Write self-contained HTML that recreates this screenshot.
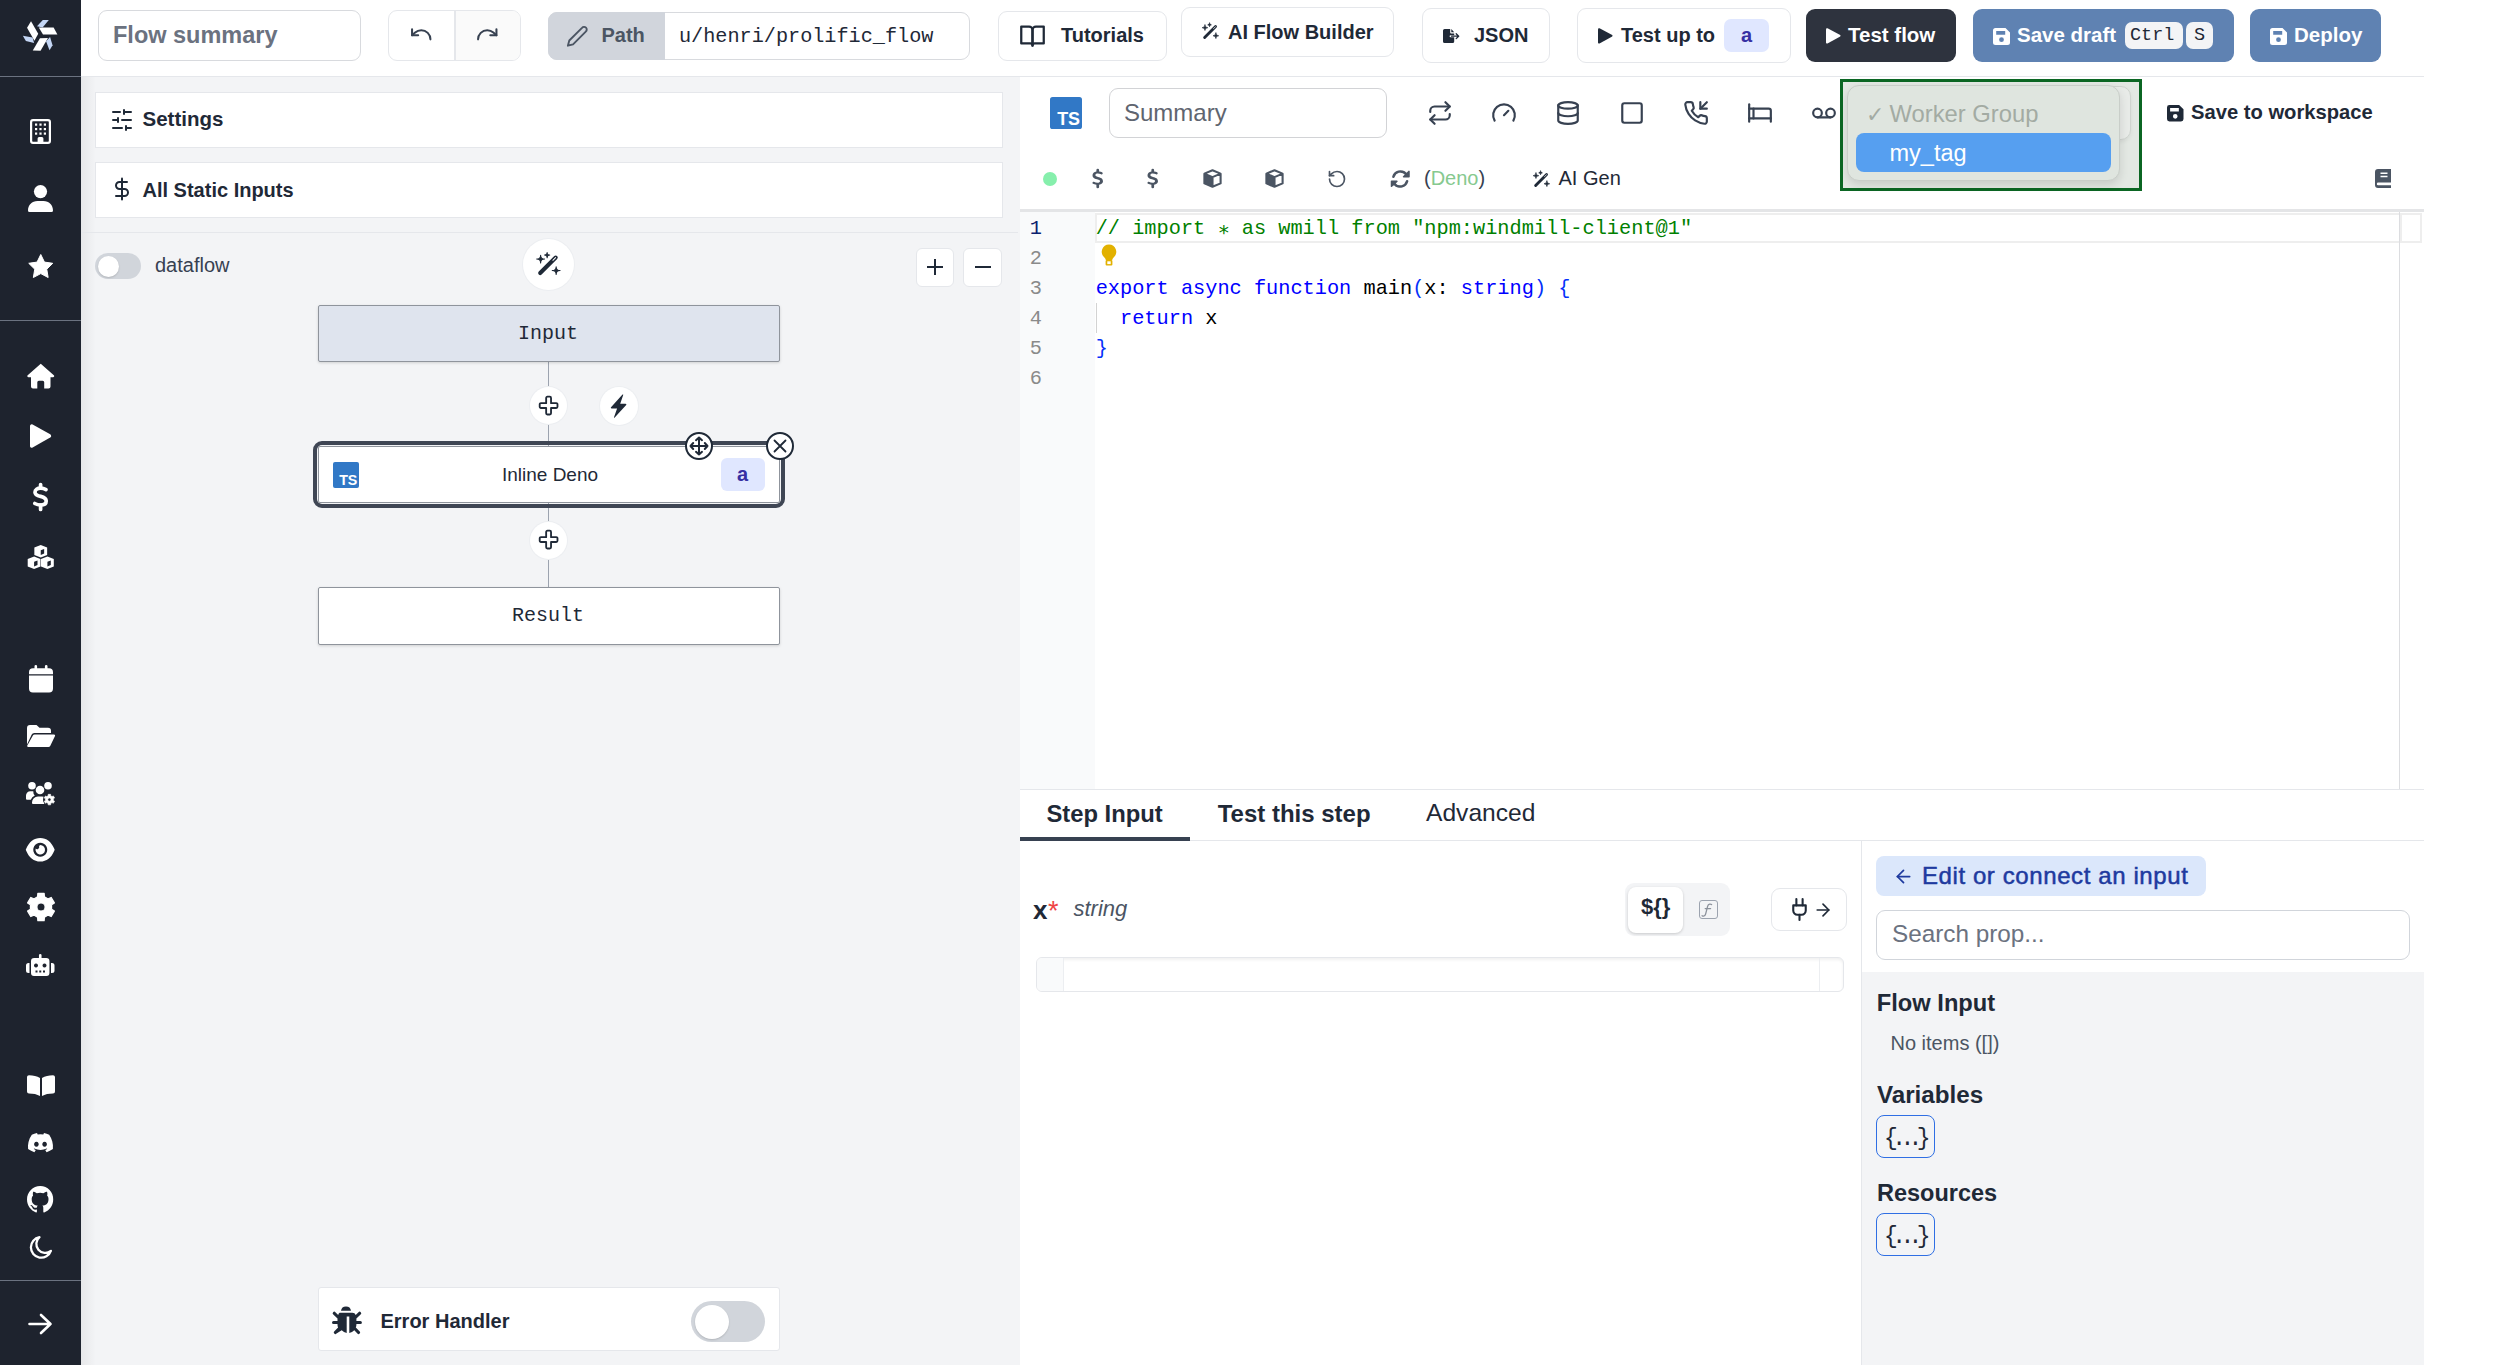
<!DOCTYPE html>
<html><head><meta charset="utf-8"><style>
html,body{margin:0;padding:0;}
body{width:2500px;height:1365px;position:relative;overflow:hidden;background:#fff;font-family:'Liberation Sans', sans-serif;color:#1f2937;}
svg{overflow:visible}
</style></head><body>
<div style="position:absolute;left:0px;top:0px;width:81px;height:1365px;background:#1e232e;"></div><div style="position:absolute;left:0px;top:76px;width:81px;height:1px;background:#6b7280;"></div><div style="position:absolute;left:0px;top:320px;width:81px;height:1px;background:#6b7280;"></div><div style="position:absolute;left:0px;top:1280px;width:81px;height:1px;background:#6b7280;"></div><div style="position:absolute;left:81px;top:76px;width:2343px;height:1px;background:#e5e7eb;"></div><div style="position:absolute;left:81px;top:77px;width:939px;height:1288px;background:#f3f4f6;"></div><div style="position:absolute;left:81px;top:77px;width:15px;height:1288px;background:linear-gradient(90deg,rgba(0,0,0,.05),rgba(0,0,0,0));"></div><div style="position:absolute;left:95px;top:92px;width:908px;height:56px;background:#fff;border:1px solid #e5e7eb;box-sizing:border-box;"></div><div style="position:absolute;left:95px;top:162px;width:908px;height:56px;background:#fff;border:1px solid #e5e7eb;box-sizing:border-box;"></div><div style="position:absolute;left:81px;top:232px;width:937px;height:1px;background:#e5e7eb;"></div><div style="position:absolute;left:1020px;top:209px;width:1404px;height:3px;background:#e4e5e7;"></div><div style="position:absolute;left:1020px;top:212px;width:75px;height:577px;background:#f9fafb;"></div><div style="position:absolute;left:2399px;top:212px;width:1px;height:577px;background:#dcdde0;"></div><div style="position:absolute;left:1020px;top:789px;width:1404px;height:1px;background:#e5e7eb;"></div><div style="position:absolute;left:1020px;top:840px;width:1404px;height:1px;background:#e5e7eb;"></div><div style="position:absolute;left:1020px;top:837px;width:170px;height:4px;background:#374151;"></div><div style="position:absolute;left:1861px;top:841px;width:1px;height:524px;background:#e5e7eb;"></div><div style="position:absolute;left:1862px;top:972px;width:562px;height:393px;background:#f3f4f6;"></div><div style="position:absolute;left:98px;top:10px;width:263px;height:51px;border:1.5px solid #d8dade;border-radius:9px;box-sizing:border-box;background:#fff;"></div><div style="position:absolute;left:113.00px;top:23.91px;font-family:'Liberation Sans', sans-serif;font-size:23.5px;line-height:23.5px;white-space:pre;font-weight:bold;color:#6b7280;">Flow summary</div><div style="position:absolute;left:388px;top:10px;width:133px;height:51px;border:1.5px solid #e5e7eb;border-radius:9px;box-sizing:border-box;background:#fff;"></div><div style="position:absolute;left:455px;top:11px;width:64.5px;height:48.5px;background:#fafafa;border-radius:0 8px 8px 0;"></div><div style="position:absolute;left:454px;top:11px;width:1.5px;height:48.5px;background:#e5e7eb;"></div><svg style="position:absolute;left:408.5px;top:22.3px;" width="24.5" height="24.5" viewBox="0 0 24 24"><g fill="none" stroke="currentColor" stroke-width="2" stroke-linecap="round" stroke-linejoin="round" style="color:#374151"><path d="M3 7v6h6"/><path d="M21 17a9 9 0 0 0-9-9 9 9 0 0 0-6 2.3L3 13"/></g></svg><svg style="position:absolute;left:474.6px;top:22.3px;" width="24.5" height="24.5" viewBox="0 0 24 24"><g fill="none" stroke="currentColor" stroke-width="2" stroke-linecap="round" stroke-linejoin="round" style="color:#374151"><path d="M21 7v6h-6"/><path d="M3 17a9 9 0 0 1 9-9 9 9 0 0 1 6 2.3l3 2.7"/></g></svg><div style="position:absolute;left:548px;top:12px;width:422px;height:48px;border:1.5px solid #d8dade;border-radius:9px;box-sizing:border-box;background:#fff;"></div><div style="position:absolute;left:548px;top:12px;width:117px;height:48px;background:#d1d5dc;border-radius:9px 0 0 9px;"></div><svg style="position:absolute;left:566px;top:24.5px;" width="22.6" height="22.6" viewBox="0 0 24 24"><g fill="none" stroke="currentColor" stroke-width="2" stroke-linecap="round" stroke-linejoin="round" style="color:#4b5563" stroke-width="1.9"><path d="M17 3a2.85 2.83 0 1 1 4 4L7.5 20.5 2 22l1.5-5.5Z"/></g></svg><div style="position:absolute;left:601.50px;top:25.47px;font-family:'Liberation Sans', sans-serif;font-size:20px;line-height:20px;white-space:pre;font-weight:bold;color:#4b5563;">Path</div><div style="position:absolute;left:679.00px;top:26.92px;font-family:'Liberation Mono', monospace;font-size:20.2px;line-height:20.2px;white-space:pre;color:#1f2937;">u/henri/prolific_flow</div><div style="position:absolute;left:998px;top:11px;width:169px;height:50px;border:1.5px solid #e5e7eb;border-radius:9px;box-sizing:border-box;background:#fff;"></div><svg style="position:absolute;left:1019px;top:22px;" width="27" height="27" viewBox="0 0 24 24"><g fill="none" stroke="currentColor" stroke-width="2" stroke-linecap="round" stroke-linejoin="round" style="color:#1f2937"><path d="M2 4h7a3 3 0 0 1 3 3v14a2 2 0 0 0-2-2H2z"/><path d="M22 4h-7a3 3 0 0 0-3 3v14a2 2 0 0 1 2-2h8z"/></g></svg><div style="position:absolute;left:1061.00px;top:25.47px;font-family:'Liberation Sans', sans-serif;font-size:20px;line-height:20px;white-space:pre;font-weight:bold;color:#1f2937;">Tutorials</div><div style="position:absolute;left:1181px;top:7px;width:213px;height:50px;border:1.5px solid #e5e7eb;border-radius:9px;box-sizing:border-box;background:#fff;"></div><svg style="position:absolute;left:1201px;top:22px;" width="19" height="19" viewBox="0 0 24 24"><g fill="none" stroke="currentColor" stroke-width="2" stroke-linecap="round" stroke-linejoin="round" style="color:#1f2937" stroke-width="2.4"><path d="M4.6 19.6L18.4 5.8" stroke="currentColor" stroke-width="3.6" stroke-linecap="round" fill="none"/><path d="M15.9 8.3L18.3 5.9" stroke="#fff" stroke-width="0.9" stroke-linecap="round" fill="none"/><path fill="currentColor" stroke="currentColor" stroke-width="0.9" stroke-linejoin="round" d="M5 3.7Q5 7.2 8.5 7.2Q5 7.2 5 10.7Q5 7.2 1.5 7.2Q5 7.2 5 3.7Z M10.8 1.3000000000000003Q10.8 3.6 13.100000000000001 3.6Q10.8 3.6 10.8 5.9Q10.8 3.6 8.5 3.6Q10.8 3.6 10.8 1.3000000000000003Z M18.8 13.899999999999999Q18.8 17.4 22.3 17.4Q18.8 17.4 18.8 20.9Q18.8 17.4 15.3 17.4Q18.8 17.4 18.8 13.899999999999999Z"/></g></svg><div style="position:absolute;left:1228.00px;top:22.27px;font-family:'Liberation Sans', sans-serif;font-size:20px;line-height:20px;white-space:pre;font-weight:bold;color:#1f2937;">AI Flow Builder</div><div style="position:absolute;left:1422px;top:8px;width:128px;height:55px;border:1.5px solid #e5e7eb;border-radius:9px;box-sizing:border-box;background:#fff;"></div><svg style="position:absolute;left:1443px;top:28.5px;" width="17" height="14" viewBox="0 0 17 14"><path fill="#1f2937" d="M0 1.6A1.6 1.6 0 0 1 1.6 0H7.2V3.6A.9.9 0 0 0 8.1 4.5H11.2V6.2H7.6a1 1 0 0 0 0 2H11.2V12.4A1.6 1.6 0 0 1 9.6 14H1.6A1.6 1.6 0 0 1 0 12.4z M8.3 0L11.2 3.3H8.3z"/><path d="M8.6 7.2H15.6M13.2 4.8l2.5 2.4-2.5 2.4" fill="none" stroke="#1f2937" stroke-width="1.3" stroke-linecap="round" stroke-linejoin="round"/></svg><div style="position:absolute;left:1474.00px;top:25.07px;font-family:'Liberation Sans', sans-serif;font-size:20px;line-height:20px;white-space:pre;font-weight:bold;color:#1f2937;">JSON</div><div style="position:absolute;left:1577px;top:8px;width:214px;height:55px;border:1.5px solid #e5e7eb;border-radius:9px;box-sizing:border-box;background:#fff;"></div><svg style="position:absolute;left:1598px;top:27.5px;" width="15" height="16" viewBox="0 0 15 16"><path fill="#1f2937" d="M1.5 0.3 L14.2 7 Q15 7.5 14.2 8.6 L1.5 15.4 Q0 16 0 14.5 V1.5 Q0 -0.2 1.5 0.3Z"/></svg><div style="position:absolute;left:1621.00px;top:25.07px;font-family:'Liberation Sans', sans-serif;font-size:20px;line-height:20px;white-space:pre;font-weight:bold;color:#1f2937;">Test up to</div><div style="position:absolute;left:1724px;top:19px;width:45px;height:33px;background:#e0e7ff;border-radius:7px;"></div><div style="position:absolute;left:1741.00px;top:25.07px;font-family:'Liberation Sans', sans-serif;font-size:20px;line-height:20px;white-space:pre;font-weight:bold;color:#3730a3;">a</div><div style="position:absolute;left:1806px;top:9px;width:150px;height:53px;background:#2e333e;border-radius:9px;"></div><svg style="position:absolute;left:1826px;top:27.5px;" width="15" height="16" viewBox="0 0 15 16"><path fill="#fff" d="M1.5 0.3 L14.2 7 Q15 7.5 14.2 8.6 L1.5 15.4 Q0 16 0 14.5 V1.5 Q0 -0.2 1.5 0.3Z"/></svg><div style="position:absolute;left:1848.00px;top:24.65px;font-family:'Liberation Sans', sans-serif;font-size:20.5px;line-height:20.5px;white-space:pre;font-weight:bold;color:#fff;">Test flow</div><div style="position:absolute;left:1973px;top:9px;width:261px;height:53px;background:#5f82b2;border-radius:9px;"></div><svg style="position:absolute;left:1993px;top:27.5px;" width="17" height="17" viewBox="0 0 17 17"><g style="color:#fff"><path fill="currentColor" fill-rule="evenodd" d="M2.5 0H12.5L17 4.5V14.5A2.5 2.5 0 0 1 14.5 17H2.5A2.5 2.5 0 0 1 0 14.5V2.5A2.5 2.5 0 0 1 2.5 0Z M3.2 3V6.8H12.2V3Z M8.5 9.3A2.4 2.4 0 1 0 8.5 14.1 2.4 2.4 0 1 0 8.5 9.3Z"/></g></svg><div style="position:absolute;left:2017.00px;top:24.65px;font-family:'Liberation Sans', sans-serif;font-size:20.5px;line-height:20.5px;white-space:pre;font-weight:bold;color:#fff;">Save draft</div><div style="position:absolute;left:2125px;top:22px;width:58px;height:27px;background:#f3f4f6;border-radius:7px;"></div><div style="position:absolute;left:2130.00px;top:27.32px;font-family:'Liberation Mono', monospace;font-size:18.5px;line-height:18.5px;white-space:pre;color:#1f2937;">Ctrl</div><div style="position:absolute;left:2186px;top:22px;width:27px;height:27px;background:#f3f4f6;border-radius:7px;"></div><div style="position:absolute;left:2194.00px;top:27.32px;font-family:'Liberation Mono', monospace;font-size:18.5px;line-height:18.5px;white-space:pre;color:#1f2937;">S</div><div style="position:absolute;left:2250px;top:9px;width:131px;height:53px;background:#5f82b2;border-radius:9px;"></div><svg style="position:absolute;left:2270px;top:27.5px;" width="17" height="17" viewBox="0 0 17 17"><g style="color:#fff"><path fill="currentColor" fill-rule="evenodd" d="M2.5 0H12.5L17 4.5V14.5A2.5 2.5 0 0 1 14.5 17H2.5A2.5 2.5 0 0 1 0 14.5V2.5A2.5 2.5 0 0 1 2.5 0Z M3.2 3V6.8H12.2V3Z M8.5 9.3A2.4 2.4 0 1 0 8.5 14.1 2.4 2.4 0 1 0 8.5 9.3Z"/></g></svg><div style="position:absolute;left:2294.00px;top:24.65px;font-family:'Liberation Sans', sans-serif;font-size:20.5px;line-height:20.5px;white-space:pre;font-weight:bold;color:#fff;">Deploy</div><svg style="position:absolute;left:0px;top:0px;" width="81" height="77" viewBox="0 0 81 77"><g transform="translate(40.4,35.4)"><polygon fill="#ffffff" points="-1.6,-7.8 13.2,-7.8 17,-1.0 2.6,-1.0"/><polygon fill="#c4d6f5" points="-3.4,-9.2 2.4,-15.4 8.4,-15.4 2.2,-7.8"/><g transform="rotate(120)"><polygon fill="#ffffff" points="-1.6,-7.8 13.2,-7.8 17,-1.0 2.6,-1.0"/><polygon fill="#c4d6f5" points="-3.4,-9.2 2.4,-15.4 8.4,-15.4 2.2,-7.8"/></g><g transform="rotate(240)"><polygon fill="#ffffff" points="-1.6,-7.8 13.2,-7.8 17,-1.0 2.6,-1.0"/><polygon fill="#c4d6f5" points="-3.4,-9.2 2.4,-15.4 8.4,-15.4 2.2,-7.8"/></g></g></svg><svg style="position:absolute;left:30px;top:119px;" width="21" height="25" viewBox="0 0 21 25"><g fill="#fff"><path fill-rule="evenodd" d="M3 0h15a3 3 0 0 1 3 3v19a3 3 0 0 1-3 3H3a3 3 0 0 1-3-3V3a3 3 0 0 1 3-3zM3 2.2a.8.8 0 0 0-.8.8v19a.8.8 0 0 0 .8.8h4.6v-3.3a1.5 1.5 0 0 1 1.5-1.5h2.8a1.5 1.5 0 0 1 1.5 1.5v3.3H18a.8.8 0 0 0 .8-.8V3a.8.8 0 0 0-.8-.8z"/><rect x="5" y="4.5" width="2.2" height="2.2"/><rect x="9.4" y="4.5" width="2.2" height="2.2"/><rect x="13.8" y="4.5" width="2.2" height="2.2"/><rect x="5" y="9" width="2.2" height="2.2"/><rect x="9.4" y="9" width="2.2" height="2.2"/><rect x="13.8" y="9" width="2.2" height="2.2"/><rect x="5" y="13.5" width="2.2" height="2.2"/><rect x="9.4" y="13.5" width="2.2" height="2.2"/><rect x="13.8" y="13.5" width="2.2" height="2.2"/></g></svg><svg style="position:absolute;left:28px;top:185px;" width="25" height="27" viewBox="0 0 25 27"><g fill="#fff"><circle cx="12.5" cy="6.6" r="6.6"/><path d="M0 25.5C0 20 4 16 9.5 16h6C21 16 25 20 25 25.5a1.5 1.5 0 0 1-1.5 1.5h-22A1.5 1.5 0 0 1 0 25.5z"/></g></svg><svg style="position:absolute;left:27.5px;top:253.5px;" width="25.5" height="25.5" viewBox="0 0 25.5 25.5"><g fill="#fff"><path d="M12.75 0.5l3.7 7.6 8.3 1.2-6 5.9 1.4 8.3-7.4-3.9-7.4 3.9 1.4-8.3-6-5.9 8.3-1.2z" stroke="#fff" stroke-width="1" stroke-linejoin="round"/></g></svg><svg style="position:absolute;left:26.5px;top:362.5px;" width="27.5" height="25.5" viewBox="0 0 27.5 25.5"><g fill="#fff"><path d="M13.75 0.8L26.8 12.2a1.2 1.2 0 0 1-.8 2.1H23.5v9.2a2 2 0 0 1-2 2h-4.3v-6.3a1.5 1.5 0 0 0-1.5-1.5h-3.9a1.5 1.5 0 0 0-1.5 1.5v6.3H6a2 2 0 0 1-2-2v-9.2H1.5a1.2 1.2 0 0 1-.8-2.1z"/></g></svg><svg style="position:absolute;left:29.5px;top:424px;" width="21.5" height="24" viewBox="0 0 21.5 24"><g fill="#fff"><path d="M2.6 0.4L20.2 10.3a1.9 1.9 0 0 1 0 3.3L2.6 23.6A1.8 1.8 0 0 1 0 22V2A1.8 1.8 0 0 1 2.6.4z"/></g></svg><svg style="position:absolute;left:32px;top:482.5px;" width="17" height="28" viewBox="0 0 17 28"><g fill="none" stroke="#fff" stroke-width="3.7" stroke-linecap="round"><path d="M14 6.6C12.6 5.8 10.6 5.2 8.6 5.2 5.4 5.2 3 6.6 3 9.2c0 2.7 2.6 3.5 5.6 4.2 3 .7 5.6 1.6 5.6 4.6 0 2.7-2.4 4-5.6 4-2.2 0-4.4-.7-5.8-1.5"/><path d="M8.6 1.5v3.4M8.6 22.2v4.3"/></g></svg><svg style="position:absolute;left:26.5px;top:545px;" width="27.5" height="24" viewBox="0 0 27.5 24"><g fill="#fff"><path fill-rule="evenodd" d="M13.75 0l6.4 2.6v7.3l-6.4 2.6-6.4-2.6V2.6z M7.1 11.4l6.4 2.6v7.4L7.1 24 .7 21.4V14z M20.4 11.4l6.4 2.6v7.4L20.4 24 14 21.4V14z"/><path fill="#1e232e" d="M13.75 5.3l3.4-1.4v4.7l-3.4 1.4z M7.1 16.8l3.4-1.4v4.7L7.1 21.5z M20.4 16.8l3.4-1.4v4.7l-3.4 1.4z"/></g></svg><svg style="position:absolute;left:28.5px;top:665px;" width="24.0" height="27.5" viewBox="0 0 24 27.5"><g fill="#fff"><path d="M5.5 1.3a1.3 1.3 0 0 1 2.6 0V3.3h7.8V1.3a1.3 1.3 0 0 1 2.6 0V3.3H20a4 4 0 0 1 4 4v2H0v-2a4 4 0 0 1 4-4h1.5z M0 10.6h24v13a3.9 3.9 0 0 1-3.9 3.9H3.9A3.9 3.9 0 0 1 0 23.6z"/></g></svg><svg style="position:absolute;left:26.5px;top:725px;" width="28.0" height="22" viewBox="0 0 28 22"><g fill="#fff"><path d="M0 3a3 3 0 0 1 3-3h6.5l3 2.8H21a3 3 0 0 1 3 3V8H7.3a3 3 0 0 0-2.7 1.7L0 19.5z M5.9 10.6a2 2 0 0 1 1.8-1.2H27a1.1 1.1 0 0 1 1 1.6l-4.8 9.9a2 2 0 0 1-1.8 1.1H1.2a1 1 0 0 1-.9-1.5z"/></g></svg><svg style="position:absolute;left:26px;top:782px;" width="28.5" height="22" viewBox="0 0 28.5 22"><g fill="#fff"><circle cx="6" cy="3.8" r="3.8"/><circle cx="22" cy="3.8" r="3.8"/><circle cx="14" cy="8" r="4.3"/><path d="M0 13.5a4.3 4.3 0 0 1 4.3-4.3h3a5.5 5.5 0 0 0 1.5 4.3 7 7 0 0 0-4 4.2H1a1 1 0 0 1-1-1z M6 20.5a6 6 0 0 1 6-6h4a6 6 0 0 1 3 .8 6.5 6.5 0 0 0-.3 6.7H7a1 1 0 0 1-1-1z"/><circle cx="23.4" cy="17.6" r="6.4" fill="#1e232e"/><path fill-rule="evenodd" stroke="#fff" stroke-width="0.6" stroke-linejoin="round" d="M22.12 13.81 L22.18 12.34 L24.62 12.34 L24.68 13.81 L26.05 14.60 L27.35 13.92 L28.56 16.02 L27.32 16.81 L27.32 18.39 L28.56 19.18 L27.35 21.28 L26.05 20.60 L24.68 21.39 L24.62 22.86 L22.18 22.86 L22.12 21.39 L20.75 20.60 L19.45 21.28 L18.24 19.18 L19.48 18.39 L19.48 16.81 L18.24 16.02 L19.45 13.92 L20.75 14.60Z M25.00 17.60 A1.6 1.6 0 1 0 21.80 17.60 A1.6 1.6 0 1 0 25.00 17.60Z"/></g></svg><svg style="position:absolute;left:26px;top:837.5px;" width="28.5" height="23.5" viewBox="0 0 28.5 23.5"><g fill="#fff"><path fill-rule="evenodd" d="M14.25 0C8 0 3 4 .3 10.6a1.7 1.7 0 0 0 0 2.3C3 19.5 8 23.5 14.25 23.5s11.25-4 13.9-10.6a1.7 1.7 0 0 0 0-2.3C25.5 4 20.5 0 14.25 0z M14.25 4.7a7 7 0 1 0 .01 0z"/><path d="M14.25 7a4.75 4.75 0 1 1-4.6 3.6 2.2 2.2 0 0 0 3.4-2.6A4.7 4.7 0 0 1 14.25 7z"/></g></svg><svg style="position:absolute;left:27.5px;top:893px;" width="26.0" height="28" viewBox="0 0 26 28"><g fill="#fff"><path fill-rule="evenodd" stroke="#fff" stroke-width="1.2" stroke-linejoin="round" d="M9.56 3.76 L9.85 0.36 L16.15 0.36 L16.44 3.76 L20.14 5.90 L23.24 4.45 L26.39 9.91 L23.59 11.87 L23.59 16.13 L26.39 18.09 L23.24 23.55 L20.14 22.10 L16.44 24.24 L16.15 27.64 L9.85 27.64 L9.56 24.24 L5.86 22.10 L2.76 23.55 L-0.39 18.09 L2.41 16.13 L2.41 11.87 L-0.39 9.91 L2.76 4.45 L5.86 5.90Z M17.10 14.00 A4.1 4.1 0 1 0 8.90 14.00 A4.1 4.1 0 1 0 17.10 14.00Z"/></g></svg><svg style="position:absolute;left:26px;top:953.5px;" width="28.5" height="22.0" viewBox="0 0 28.5 22"><g fill="#fff"><path fill-rule="evenodd" d="M14.25 0a1.3 1.3 0 0 1 1.3 1.3V4h4.7a3.2 3.2 0 0 1 3.2 3.2V19a3 3 0 0 1-3 3H8a3 3 0 0 1-3-3V7.2A3.2 3.2 0 0 1 8.2 4h4.75V1.3A1.3 1.3 0 0 1 14.25 0z M10 9.5a2 2 0 1 0 .01 0z M18.5 9.5a2 2 0 1 0 .01 0z M9.5 16.5v2h2v-2z M13.25 16.5v2h2v-2z M17 16.5v2h2v-2z"/><path d="M0 11.5a2.5 2.5 0 0 1 2.5-2.5H3.5v10H2.5A2.5 2.5 0 0 1 0 16.5z M28.5 11.5a2.5 2.5 0 0 0-2.5-2.5H25v10h1a2.5 2.5 0 0 0 2.5-2.5z"/></g></svg><svg style="position:absolute;left:26.5px;top:1075px;" width="28.0" height="21" viewBox="0 0 28 21"><g fill="#fff"><path d="M0 2.2C0 1 .9.2 2 .2c4.2 0 8 .9 11 2.7V21C10 19.3 6.2 18.5 2 18.5A2 2 0 0 1 0 16.5z M28 2.2C28 1 27.1.2 26 .2c-4.2 0-8 .9-11 2.7V21c3-1.7 6.8-2.5 11-2.5a2 2 0 0 0 2-2z"/></g></svg><svg style="position:absolute;left:28px;top:1132.5px;" width="25" height="20.0" viewBox="0 0 25 20"><g fill="#fff"><path fill-rule="evenodd" d="M21.2 1.7A20.5 20.5 0 0 0 16 0l-.7 1.4a19 19 0 0 0-5.6 0L9 0a20.5 20.5 0 0 0-5.2 1.7C.5 6.5-.4 11.3.1 16a20.7 20.7 0 0 0 6.3 3.2l1.4-2.2a13.6 13.6 0 0 1-2.1-1l.5-.4a14.7 14.7 0 0 0 12.6 0l.5.4a13.6 13.6 0 0 1-2.1 1l1.4 2.2A20.6 20.6 0 0 0 24.9 16c.5-5.4-.9-10.2-3.7-14.3z M8.4 8.8a2.3 2.5 0 1 0 .01 0z M16.6 8.8a2.3 2.5 0 1 0 .01 0z"/></g></svg><svg style="position:absolute;left:27px;top:1186px;" width="26.5" height="27" viewBox="0 0 26.5 27"><g fill="#fff"><path fill-rule="evenodd" d="M13.25 0C5.9 0 0 6 0 13.5c0 6 3.8 11.1 9 12.9.7.1.9-.3.9-.6v-2.3c-3.7.8-4.5-1.8-4.5-1.8-.6-1.6-1.5-2-1.5-2-1.2-.8.1-.8.1-.8 1.3.1 2 1.4 2 1.4 1.2 2.1 3.1 1.5 3.9 1.1.1-.9.5-1.5.8-1.8-2.9-.3-6-1.5-6-6.6 0-1.5.5-2.7 1.4-3.6-.1-.3-.6-1.7.1-3.6 0 0 1.1-.4 3.6 1.4a12.4 12.4 0 0 1 6.6 0c2.5-1.7 3.6-1.4 3.6-1.4.7 1.9.3 3.3.1 3.6.9.9 1.4 2.1 1.4 3.6 0 5.2-3.1 6.3-6.1 6.6.5.4.9 1.2.9 2.5v3.7c0 .4.2.8.9.6 5.3-1.8 9-6.9 9-12.9C26.5 6 20.6 0 13.25 0z"/></g></svg><svg style="position:absolute;left:28.5px;top:1235.5px;" width="23.5" height="23" viewBox="0 0 23.5 23"><path d="M10.5 1.2A10.3 10.3 0 1 0 21.9 14.8 8.2 8.2 0 0 1 10.5 1.2z" fill="none" stroke="#fff" stroke-width="2.3" stroke-linejoin="round"/></svg><svg style="position:absolute;left:28px;top:1313px;" width="25" height="22" viewBox="0 0 25 22"><path d="M1.5 11h21M13 2l9.5 9L13 20" fill="none" stroke="#fff" stroke-width="2.6" stroke-linecap="round" stroke-linejoin="round"/></svg><svg style="position:absolute;left:110px;top:108px;" width="24" height="24" viewBox="0 0 24 24"><g fill="none" stroke="currentColor" stroke-width="2" stroke-linecap="round" stroke-linejoin="round" style="color:#1f2937" stroke-width="2"><line x1="21" x2="14" y1="4" y2="4"/><line x1="10" x2="3" y1="4" y2="4"/><line x1="21" x2="12" y1="12" y2="12"/><line x1="8" x2="3" y1="12" y2="12"/><line x1="21" x2="16" y1="20" y2="20"/><line x1="12" x2="3" y1="20" y2="20"/><line x1="14" x2="14" y1="2" y2="6"/><line x1="8" x2="8" y1="10" y2="14"/><line x1="16" x2="16" y1="18" y2="22"/></g></svg><div style="position:absolute;left:142.50px;top:108.65px;font-family:'Liberation Sans', sans-serif;font-size:20.5px;line-height:20.5px;white-space:pre;font-weight:bold;color:#1f2937;">Settings</div><svg style="position:absolute;left:110px;top:177px;" width="24" height="24" viewBox="0 0 24 24"><g fill="none" stroke="currentColor" stroke-width="2" stroke-linecap="round" stroke-linejoin="round" style="color:#1f2937" stroke-width="1.9"><line x1="12" x2="12" y1="1.5" y2="22.5"/><path d="M17 5H9.5a3.5 3.5 0 0 0 0 7h5a3.5 3.5 0 0 1 0 7H6"/></g></svg><div style="position:absolute;left:142.50px;top:179.57px;font-family:'Liberation Sans', sans-serif;font-size:20px;line-height:20px;white-space:pre;font-weight:bold;color:#1f2937;">All Static Inputs</div><div style="position:absolute;left:95px;top:253px;width:46px;height:26px;background:#d1d5db;border-radius:13px;"></div><div style="position:absolute;left:97.5px;top:255.5px;width:21.0px;height:21.0px;background:#fff;border-radius:50%;box-shadow:0 1px 2px rgba(0,0,0,.15);"></div><div style="position:absolute;left:155.00px;top:255.27px;font-family:'Liberation Sans', sans-serif;font-size:20px;line-height:20px;white-space:pre;color:#374151;">dataflow</div><div style="position:absolute;left:523px;top:239px;width:51px;height:51px;background:#fff;border-radius:50%;box-shadow:0 0 0 1px #eceef1;"></div><svg style="position:absolute;left:535px;top:251px;" width="27" height="27" viewBox="0 0 24 24"><g fill="none" stroke="currentColor" stroke-width="2" stroke-linecap="round" stroke-linejoin="round" style="color:#1f2937" stroke-width="2.3"><path d="M4.6 19.6L18.4 5.8" stroke="currentColor" stroke-width="3.6" stroke-linecap="round" fill="none"/><path d="M15.9 8.3L18.3 5.9" stroke="#fff" stroke-width="0.9" stroke-linecap="round" fill="none"/><path fill="currentColor" stroke="currentColor" stroke-width="0.9" stroke-linejoin="round" d="M5 3.7Q5 7.2 8.5 7.2Q5 7.2 5 10.7Q5 7.2 1.5 7.2Q5 7.2 5 3.7Z M10.8 1.3000000000000003Q10.8 3.6 13.100000000000001 3.6Q10.8 3.6 10.8 5.9Q10.8 3.6 8.5 3.6Q10.8 3.6 10.8 1.3000000000000003Z M18.8 13.899999999999999Q18.8 17.4 22.3 17.4Q18.8 17.4 18.8 20.9Q18.8 17.4 15.3 17.4Q18.8 17.4 18.8 13.899999999999999Z"/></g></svg><div style="position:absolute;left:916px;top:248px;width:38px;height:39px;background:#fff;border:1px solid #e5e7eb;border-radius:6px;box-sizing:border-box;"></div><svg style="position:absolute;left:925px;top:257px;" width="20" height="20" viewBox="0 0 20 20"><path d="M10 2v16M2 10h16" stroke="#1f2937" stroke-width="2" fill="none"/></svg><div style="position:absolute;left:963px;top:248px;width:39px;height:39px;background:#fff;border:1px solid #e5e7eb;border-radius:6px;box-sizing:border-box;"></div><svg style="position:absolute;left:973px;top:257px;" width="20" height="20" viewBox="0 0 20 20"><path d="M2 10h16" stroke="#1f2937" stroke-width="2" fill="none"/></svg><div style="position:absolute;left:547.5px;top:362px;width:1.5px;height:225px;background:#9ca3af;"></div><div style="position:absolute;left:318px;top:305px;width:462px;height:57px;background:#dfe4ee;border:1.5px solid #8f949c;border-radius:2px;box-sizing:border-box;box-shadow:0 1px 3px rgba(0,0,0,.15);"></div><div style="position:absolute;left:448.00px;top:324.17px;font-family:'Liberation Mono', monospace;font-size:20px;line-height:20px;white-space:pre;width:200px;text-align:center;color:#1f2937;">Input</div><div style="position:absolute;left:530.0px;top:387.0px;width:37.0px;height:37.0px;background:#fff;border-radius:50%;box-shadow:0 0 0 1px #eceef1;"></div><svg style="position:absolute;left:538.9px;top:395.9px;" width="19.2" height="19.2" viewBox="0 0 22 22"><path d="M8.2 2.2a1.4 1.4 0 0 1 1.4-1.4h2.8a1.4 1.4 0 0 1 1.4 1.4v6h6a1.4 1.4 0 0 1 1.4 1.4v2.8a1.4 1.4 0 0 1-1.4 1.4h-6v6a1.4 1.4 0 0 1-1.4 1.4H9.6a1.4 1.4 0 0 1-1.4-1.4v-6h-6A1.4 1.4 0 0 1 .8 12.4V9.6a1.4 1.4 0 0 1 1.4-1.4h6z" fill="none" stroke="#1f2937" stroke-width="2.1" stroke-linejoin="round"/></svg><div style="position:absolute;left:530.0px;top:521.5px;width:37.0px;height:37.0px;background:#fff;border-radius:50%;box-shadow:0 0 0 1px #eceef1;"></div><svg style="position:absolute;left:538.9px;top:530.4px;" width="19.2" height="19.2" viewBox="0 0 22 22"><path d="M8.2 2.2a1.4 1.4 0 0 1 1.4-1.4h2.8a1.4 1.4 0 0 1 1.4 1.4v6h6a1.4 1.4 0 0 1 1.4 1.4v2.8a1.4 1.4 0 0 1-1.4 1.4h-6v6a1.4 1.4 0 0 1-1.4 1.4H9.6a1.4 1.4 0 0 1-1.4-1.4v-6h-6A1.4 1.4 0 0 1 .8 12.4V9.6a1.4 1.4 0 0 1 1.4-1.4h6z" fill="none" stroke="#1f2937" stroke-width="2.1" stroke-linejoin="round"/></svg><div style="position:absolute;left:599.5px;top:387px;width:38.0px;height:38px;background:#fff;border-radius:50%;box-shadow:0 0 0 1px #eceef1;"></div><svg style="position:absolute;left:608px;top:394px;" width="21" height="24" viewBox="0 0 21 24"><path d="M14.5.6L3 13.2a.8.8 0 0 0 .6 1.3h5.5L6 23.2a.4.4 0 0 0 .7.4L18.2 11a.8.8 0 0 0-.6-1.3h-5.4L15.2 1a.4.4 0 0 0-.7-.4z" fill="#1f2937"/></svg><div style="position:absolute;left:313px;top:441px;width:472px;height:67px;border:4px solid #3f4654;border-radius:9px;box-sizing:border-box;"></div><div style="position:absolute;left:318px;top:446px;width:462px;height:57px;background:#fff;border:1.5px solid #8f949c;border-radius:2px;box-sizing:border-box;"></div><div style="position:absolute;left:333px;top:462px;width:25.5px;height:25.5px;background:#3178c6;border-radius:2.0px;"></div><div style="position:absolute;left:331.47px;top:473.12px;font-family:'Liberation Sans', sans-serif;font-size:14.280000000000001px;line-height:14.280000000000001px;white-space:pre;width:25.5px;text-align:right;font-weight:bold;color:#fff;letter-spacing:-0.3px;">TS</div><div style="position:absolute;left:450.00px;top:465.22px;font-family:'Liberation Sans', sans-serif;font-size:19px;line-height:19px;white-space:pre;width:200px;text-align:center;color:#1f2937;">Inline Deno</div><div style="position:absolute;left:720.5px;top:458px;width:44.5px;height:33px;background:#e0e7ff;border-radius:6px;"></div><div style="position:absolute;left:732.50px;top:464.07px;font-family:'Liberation Sans', sans-serif;font-size:20px;line-height:20px;white-space:pre;width:20px;text-align:center;font-weight:bold;color:#3730a3;">a</div><div style="position:absolute;left:685px;top:432px;width:28px;height:28px;background:#fff;border:2.5px solid #1f2937;border-radius:50%;box-sizing:border-box;"></div><svg style="position:absolute;left:689px;top:436px;" width="20" height="20" viewBox="0 0 20 20"><g fill="none" stroke="currentColor" stroke-width="2" stroke-linecap="round" stroke-linejoin="round" style="color:#1f2937" stroke-width="1.8"><path d="M10 1.5v17M1.5 10h17M7 4.2l3-2.7 3 2.7M7 15.8l3 2.7 3-2.7M4.2 7L1.5 10l2.7 3M15.8 7l2.7 3-2.7 3"/></g></svg><div style="position:absolute;left:766px;top:432px;width:28px;height:28px;background:#fff;border:2.5px solid #1f2937;border-radius:50%;box-sizing:border-box;"></div><svg style="position:absolute;left:772px;top:438px;" width="16" height="16" viewBox="0 0 16 16"><path d="M2.5 2.5l11 11M13.5 2.5l-11 11" stroke="#1f2937" stroke-width="1.8" stroke-linecap="round"/></svg><div style="position:absolute;left:318px;top:587px;width:462px;height:58px;background:#fff;border:1.5px solid #8f949c;border-radius:2px;box-sizing:border-box;box-shadow:0 1px 3px rgba(0,0,0,.15);"></div><div style="position:absolute;left:448.00px;top:606.17px;font-family:'Liberation Mono', monospace;font-size:20px;line-height:20px;white-space:pre;width:200px;text-align:center;color:#1f2937;">Result</div><div style="position:absolute;left:318px;top:1287px;width:462px;height:64px;background:#fff;border:1px solid #e5e7eb;border-radius:3px;box-sizing:border-box;"></div><svg style="position:absolute;left:332px;top:1306px;" width="28" height="28" viewBox="0 0 28 28"><path fill="#1f2937" d="M14 .5a5 5 0 0 1 5 4.3H9A5 5 0 0 1 14 .5z M7.6 6.7h12.8a3.5 3.5 0 0 1 3.3 2.4l2.8-2.8a1.5 1.5 0 1 1 2.1 2.1l-4.2 4.2V15h4a1.5 1.5 0 0 1 0 3h-4v.4a9 9 0 0 1-.6 3.2l3.7 3.7a1.5 1.5 0 1 1-2.1 2.1l-3.1-3.1a9.6 9.6 0 0 1-5 2.7V10.6h-2.6V27a9.6 9.6 0 0 1-5-2.7L4.5 27.4a1.5 1.5 0 1 1-2.1-2.1l3.7-3.7a9 9 0 0 1-.6-3.2V18H1.5a1.5 1.5 0 0 1 0-3h4v-2.4L1.3 8.4a1.5 1.5 0 1 1 2.1-2.1l2.8 2.8a3.5 3.5 0 0 1 1.4-2.4z"/></svg><div style="position:absolute;left:380.50px;top:1310.57px;font-family:'Liberation Sans', sans-serif;font-size:20px;line-height:20px;white-space:pre;font-weight:bold;color:#1f2937;">Error Handler</div><div style="position:absolute;left:691px;top:1301px;width:74px;height:41px;background:#d1d5db;border-radius:21px;"></div><div style="position:absolute;left:694.5px;top:1304.5px;width:34.0px;height:34.0px;background:#fff;border-radius:50%;box-shadow:0 1px 2px rgba(0,0,0,.15);"></div><div style="position:absolute;left:1049.5px;top:97px;width:32.0px;height:32px;background:#3178c6;border-radius:2.6px;"></div><div style="position:absolute;left:1047.58px;top:110.95px;font-family:'Liberation Sans', sans-serif;font-size:17.92px;line-height:17.92px;white-space:pre;width:32px;text-align:right;font-weight:bold;color:#fff;letter-spacing:-0.3px;">TS</div><div style="position:absolute;left:1109px;top:88px;width:278px;height:50px;border:1.5px solid #d2d3d6;border-radius:9px;box-sizing:border-box;background:#fff;"></div><div style="position:absolute;left:1124.00px;top:101.18px;font-family:'Liberation Sans', sans-serif;font-size:24px;line-height:24px;white-space:pre;color:#5f6570;">Summary</div><svg style="position:absolute;left:1427.0px;top:100.0px;" width="26" height="26" viewBox="0 0 24 24"><g fill="none" stroke="currentColor" stroke-width="2" stroke-linecap="round" stroke-linejoin="round" stroke-width="1.8" style="color:#374151"><path d="m17 2 4 4-4 4"/><path d="M3 11v-1a4 4 0 0 1 4-4h14"/><path d="m7 22-4-4 4-4"/><path d="M21 13v1a4 4 0 0 1-4 4H3"/></g></svg><svg style="position:absolute;left:1490.7px;top:100.0px;" width="26" height="26" viewBox="0 0 24 24"><g fill="none" stroke="currentColor" stroke-width="2" stroke-linecap="round" stroke-linejoin="round" stroke-width="1.8" style="color:#374151"><path d="m12 14 4-4"/><path d="M3.34 19a10 10 0 1 1 17.32 0"/></g></svg><svg style="position:absolute;left:1554.7px;top:100.0px;" width="26" height="26" viewBox="0 0 24 24"><g fill="none" stroke="currentColor" stroke-width="2" stroke-linecap="round" stroke-linejoin="round" stroke-width="1.8" style="color:#374151"><ellipse cx="12" cy="5" rx="9" ry="3"/><path d="M3 5V19A9 3 0 0 0 21 19V5"/><path d="M3 12A9 3 0 0 0 21 12"/></g></svg><svg style="position:absolute;left:1618.8px;top:100.0px;" width="26" height="26" viewBox="0 0 24 24"><g fill="none" stroke="currentColor" stroke-width="2" stroke-linecap="round" stroke-linejoin="round" stroke-width="1.8" style="color:#374151"><rect width="18" height="18" x="3" y="3" rx="2"/></g></svg><svg style="position:absolute;left:1682.5px;top:100.0px;" width="26" height="26" viewBox="0 0 24 24"><g fill="none" stroke="currentColor" stroke-width="2" stroke-linecap="round" stroke-linejoin="round" stroke-width="1.8" style="color:#374151"><polyline points="16 2 16 8 22 8"/><line x1="22" x2="16" y1="2" y2="8"/><path d="M22 16.92v3a2 2 0 0 1-2.18 2 19.79 19.79 0 0 1-8.63-3.07 19.5 19.5 0 0 1-6-6 19.79 19.79 0 0 1-3.07-8.67A2 2 0 0 1 4.11 2h3a2 2 0 0 1 2 1.72 12.84 12.84 0 0 0 .7 2.81 2 2 0 0 1-.45 2.11L8.09 9.91a16 16 0 0 0 6 6l1.27-1.27a2 2 0 0 1 2.11-.45 12.84 12.84 0 0 0 2.81.7A2 2 0 0 1 22 16.92z"/></g></svg><svg style="position:absolute;left:1746.7px;top:100.0px;" width="26" height="26" viewBox="0 0 24 24"><g fill="none" stroke="currentColor" stroke-width="2" stroke-linecap="round" stroke-linejoin="round" stroke-width="1.8" style="color:#374151"><path d="M2 4v16"/><path d="M2 8h18a2 2 0 0 1 2 2v10"/><path d="M2 17h20"/><path d="M6 8v9"/></g></svg><svg style="position:absolute;left:1810.5px;top:100.0px;" width="26" height="26" viewBox="0 0 24 24"><g fill="none" stroke="currentColor" stroke-width="2" stroke-linecap="round" stroke-linejoin="round" stroke-width="1.8" style="color:#374151"><circle cx="6" cy="12" r="4"/><circle cx="18" cy="12" r="4"/><line x1="6" x2="18" y1="16" y2="16"/></g></svg><svg style="position:absolute;left:2167px;top:105px;" width="16.5" height="16.5" viewBox="0 0 17 17"><g style="color:#1f2937"><path fill="currentColor" fill-rule="evenodd" d="M2.5 0H12.5L17 4.5V14.5A2.5 2.5 0 0 1 14.5 17H2.5A2.5 2.5 0 0 1 0 14.5V2.5A2.5 2.5 0 0 1 2.5 0Z M3.2 3V6.8H12.2V3Z M8.5 9.3A2.4 2.4 0 1 0 8.5 14.1 2.4 2.4 0 1 0 8.5 9.3Z"/></g></svg><div style="position:absolute;left:2191.00px;top:102.30px;font-family:'Liberation Sans', sans-serif;font-size:20.2px;line-height:20.2px;white-space:pre;font-weight:bold;color:#1f2937;">Save to workspace</div><svg style="position:absolute;left:2375px;top:169px;" width="16" height="19" viewBox="0 0 16 19"><path fill="#4b5563" fill-rule="evenodd" d="M3 0H16V13.5H3.2A1.4 1.4 0 0 0 3.2 16.3H16V19H3A3 3 0 0 1 0 16V3A3 3 0 0 1 3 0z M5.5 3.5v1.6H12.5V3.5z M5.5 6.7v1.6H12.5V6.7z"/></svg><div style="position:absolute;left:1042.5px;top:171.5px;width:14.0px;height:14.0px;background:#86efac;border-radius:50%;"></div><svg style="position:absolute;left:1091.5px;top:169px;" width="11.5" height="19" viewBox="0 0 11.5 19"><path fill="#4b5563" d="M4.4 1a1.35 1.35 0 0 1 2.7 0v1.4c1.2.2 2.3.5 3 .9a1.1 1.1 0 0 1-1 2c-1-.5-2.3-.8-3.4-.8-1.3 0-2.4.6-2.4 1.6 0 .8.7 1.2 2.8 1.8 2.4.7 4.9 1.4 4.9 4.4 0 1.9-1.5 3.2-3.9 3.5V17.9a1.35 1.35 0 0 1-2.7 0v-2.1c-1.4-.2-2.6-.6-3.4-1a1.1 1.1 0 0 1 .9-2c1 .5 2.3.9 3.6.9 1.6 0 2.5-.6 2.5-1.5 0-.9-.8-1.3-3-1.9C1.7 9.6.5 8.6.5 6.3.5 4.4 2 3 4.4 2.5z"/></svg><svg style="position:absolute;left:1147px;top:169px;" width="11.5" height="19" viewBox="0 0 11.5 19"><path fill="#4b5563" d="M4.4 1a1.35 1.35 0 0 1 2.7 0v1.4c1.2.2 2.3.5 3 .9a1.1 1.1 0 0 1-1 2c-1-.5-2.3-.8-3.4-.8-1.3 0-2.4.6-2.4 1.6 0 .8.7 1.2 2.8 1.8 2.4.7 4.9 1.4 4.9 4.4 0 1.9-1.5 3.2-3.9 3.5V17.9a1.35 1.35 0 0 1-2.7 0v-2.1c-1.4-.2-2.6-.6-3.4-1a1.1 1.1 0 0 1 .9-2c1 .5 2.3.9 3.6.9 1.6 0 2.5-.6 2.5-1.5 0-.9-.8-1.3-3-1.9C1.7 9.6.5 8.6.5 6.3.5 4.4 2 3 4.4 2.5z"/></svg><svg style="position:absolute;left:1202.5px;top:169px;" width="19" height="19" viewBox="0 0 19 19"><path fill="#4b5563" d="M1.6 4.8L9.5 8.2V17.8L1.6 14.2Z"/><path fill="none" stroke="#4b5563" stroke-width="2.1" stroke-linejoin="round" d="M9.5 1.2L17.6 4.6V14.4L9.5 17.8L1.4 14.4V4.6Z M1.4 4.6L9.5 8.1L17.6 4.6 M9.5 8.1V17.8"/></svg><svg style="position:absolute;left:1265px;top:169px;" width="19" height="19" viewBox="0 0 19 19"><path fill="#4b5563" d="M1.6 4.8L9.5 8.2V17.8L1.6 14.2Z"/><path fill="none" stroke="#4b5563" stroke-width="2.1" stroke-linejoin="round" d="M9.5 1.2L17.6 4.6V14.4L9.5 17.8L1.4 14.4V4.6Z M1.4 4.6L9.5 8.1L17.6 4.6 M9.5 8.1V17.8"/></svg><svg style="position:absolute;left:1327.0px;top:168.5px;" width="20" height="20" viewBox="0 0 24 24"><g fill="none" stroke="currentColor" stroke-width="2" stroke-linecap="round" stroke-linejoin="round" stroke-width="2.3" style="color:#4b5563"><path d="M3 12a9 9 0 1 0 9-9 9.75 9.75 0 0 0-6.74 2.74L3 8"/><path d="M3 3v5h5"/></g></svg><svg style="position:absolute;left:1390.5px;top:169.5px;" width="18.5" height="18" viewBox="0 0 18 18"><path fill="#4b5563" d="M15.3 2.7A8.6 8.6 0 0 0 .9 6.4a1.3 1.3 0 0 0 2.5.7 6 6 0 0 1 10.1-2.6L11.8 6.2a.8.8 0 0 0 .6 1.4h5.3a.8.8 0 0 0 .8-.8V1.5A.8.8 0 0 0 17.1.9z M2.7 15.3A8.6 8.6 0 0 0 17.1 11.6a1.3 1.3 0 0 0-2.5-.7 6 6 0 0 1-10.1 2.6l1.7-1.7a.8.8 0 0 0-.6-1.4H.3a.8.8 0 0 0-.8.8v5.3a.8.8 0 0 0 .9.6z"/></svg><div style="position:absolute;left:1424.00px;top:168.07px;font-family:'Liberation Sans', sans-serif;font-size:20px;line-height:20px;white-space:pre;color:#374151;">(<span style="color:#86c98f">Deno</span>)</div><svg style="position:absolute;left:1531.5px;top:169.5px;" width="19" height="19" viewBox="0 0 24 24"><g fill="none" stroke="currentColor" stroke-width="2" stroke-linecap="round" stroke-linejoin="round" style="color:#1f2937" stroke-width="2.4"><path d="M4.6 19.6L18.4 5.8" stroke="currentColor" stroke-width="3.6" stroke-linecap="round" fill="none"/><path d="M15.9 8.3L18.3 5.9" stroke="#fff" stroke-width="0.9" stroke-linecap="round" fill="none"/><path fill="currentColor" stroke="currentColor" stroke-width="0.9" stroke-linejoin="round" d="M5 3.7Q5 7.2 8.5 7.2Q5 7.2 5 10.7Q5 7.2 1.5 7.2Q5 7.2 5 3.7Z M10.8 1.3000000000000003Q10.8 3.6 13.100000000000001 3.6Q10.8 3.6 10.8 5.9Q10.8 3.6 8.5 3.6Q10.8 3.6 10.8 1.3000000000000003Z M18.8 13.899999999999999Q18.8 17.4 22.3 17.4Q18.8 17.4 18.8 20.9Q18.8 17.4 15.3 17.4Q18.8 17.4 18.8 13.899999999999999Z"/></g></svg><div style="position:absolute;left:1558.50px;top:168.07px;font-family:'Liberation Sans', sans-serif;font-size:20px;line-height:20px;white-space:pre;color:#1f2937;">AI Gen</div><div style="position:absolute;left:1840px;top:79px;width:302px;height:112px;border:3px solid #0b6623;box-sizing:border-box;background:#e3e8e3;"></div><div style="position:absolute;left:1862px;top:86px;width:269px;height:54px;background:#e8ebe8;border:1px solid #cfd4cf;border-radius:10px;box-sizing:border-box;box-shadow:0 2px 4px rgba(0,0,0,.06);"></div><div style="position:absolute;left:1847px;top:85px;width:273px;height:96px;background:#dfe5df;border:1px solid #c9cec9;border-radius:12px;box-sizing:border-box;box-shadow:0 4px 10px rgba(0,0,0,.12);"></div><div style="position:absolute;left:1866.00px;top:103.88px;font-family:'Liberation Sans', sans-serif;font-size:22px;line-height:22px;white-space:pre;color:#a3aba3;">✓</div><div style="position:absolute;left:1889.50px;top:102.35px;font-family:'Liberation Sans', sans-serif;font-size:23.8px;line-height:23.8px;white-space:pre;color:#a3aba3;">Worker Group</div><div style="position:absolute;left:1856px;top:133px;width:255px;height:39px;background:#569ff0;border-radius:8px;"></div><div style="position:absolute;left:1889.50px;top:141.61px;font-family:'Liberation Sans', sans-serif;font-size:23.5px;line-height:23.5px;white-space:pre;color:#fff;">my_tag</div><div style="position:absolute;left:1095px;top:213px;width:1304px;height:30px;border:2px solid #eeeeee;border-right:none;box-sizing:border-box;"></div><div style="position:absolute;left:2400px;top:213px;width:22px;height:30px;border:2px solid #eeeeee;box-sizing:border-box;"></div><div style="position:absolute;left:1001.80px;top:218.74px;font-family:'Liberation Mono', monospace;font-size:20.3px;line-height:20.3px;white-space:pre;width:40px;text-align:right;color:#0b216f;">1</div><div style="position:absolute;left:1001.80px;top:248.79px;font-family:'Liberation Mono', monospace;font-size:20.3px;line-height:20.3px;white-space:pre;width:40px;text-align:right;color:#8a8a8a;">2</div><div style="position:absolute;left:1001.80px;top:278.84px;font-family:'Liberation Mono', monospace;font-size:20.3px;line-height:20.3px;white-space:pre;width:40px;text-align:right;color:#8a8a8a;">3</div><div style="position:absolute;left:1001.80px;top:308.89px;font-family:'Liberation Mono', monospace;font-size:20.3px;line-height:20.3px;white-space:pre;width:40px;text-align:right;color:#8a8a8a;">4</div><div style="position:absolute;left:1001.80px;top:338.94px;font-family:'Liberation Mono', monospace;font-size:20.3px;line-height:20.3px;white-space:pre;width:40px;text-align:right;color:#8a8a8a;">5</div><div style="position:absolute;left:1001.80px;top:368.99px;font-family:'Liberation Mono', monospace;font-size:20.3px;line-height:20.3px;white-space:pre;width:40px;text-align:right;color:#8a8a8a;">6</div><div style="position:absolute;left:1095.70px;top:218.74px;font-family:'Liberation Mono', monospace;font-size:20.3px;line-height:20.3px;white-space:pre;color:#000;"><span style="color:#008000">// import <span style="display:inline-block;width:12.18px;text-align:center;position:relative;top:2px">∗</span> as wmill from "npm:windmill-client@1"</span></div><div style="position:absolute;left:1095.70px;top:278.84px;font-family:'Liberation Mono', monospace;font-size:20.3px;line-height:20.3px;white-space:pre;color:#000;"><span style="color:#0000ff">export</span> <span style="color:#0000ff">async</span> <span style="color:#0000ff">function</span> main<span style="color:#0431fa">(</span>x: <span style="color:#0000ff">string</span><span style="color:#0431fa">)</span> <span style="color:#0431fa">{</span></div><div style="position:absolute;left:1095.70px;top:308.89px;font-family:'Liberation Mono', monospace;font-size:20.3px;line-height:20.3px;white-space:pre;color:#000;">  <span style="color:#0000ff">return</span> x</div><div style="position:absolute;left:1095.70px;top:338.94px;font-family:'Liberation Mono', monospace;font-size:20.3px;line-height:20.3px;white-space:pre;color:#000;"><span style="color:#0431fa">}</span></div><div style="position:absolute;left:1096px;top:303px;width:1.2000000000000455px;height:30px;background:#d3d3d3;"></div><svg style="position:absolute;left:1101px;top:244px;" width="16" height="22" viewBox="0 0 16 22"><path fill="#e2b100" d="M8 0.5A7.3 7.3 0 0 1 12.6 13.4c-.8.8-1.3 1.6-1.4 2.6H4.8c-.1-1-.6-1.8-1.4-2.6A7.3 7.3 0 0 1 8 .5z"/><rect x="4.6" y="16" width="6.8" height="5.5" rx="1" fill="#e2b100"/><rect x="6.3" y="17.3" width="3.4" height="2.8" fill="#fff"/></svg><div style="position:absolute;left:1046.40px;top:801.85px;font-family:'Liberation Sans', sans-serif;font-size:23.8px;line-height:23.8px;white-space:pre;font-weight:bold;color:#1f2937;">Step Input</div><div style="position:absolute;left:1217.70px;top:801.68px;font-family:'Liberation Sans', sans-serif;font-size:24px;line-height:24px;white-space:pre;font-weight:bold;color:#1f2937;">Test this step</div><div style="position:absolute;left:1426.00px;top:801.18px;font-family:'Liberation Sans', sans-serif;font-size:24.6px;line-height:24.6px;white-space:pre;color:#1f2937;">Advanced</div><div style="position:absolute;left:1033.00px;top:896.59px;font-family:'Liberation Sans', sans-serif;font-size:26px;line-height:26px;white-space:pre;font-weight:bold;color:#1f2937;">x</div><div style="position:absolute;left:1048.00px;top:897.64px;font-family:'Liberation Sans', sans-serif;font-size:27px;line-height:27px;white-space:pre;color:#ef4444;">*</div><div style="position:absolute;left:1073.50px;top:897.68px;font-family:'Liberation Sans', sans-serif;font-size:22px;line-height:22px;white-space:pre;font-style:italic;color:#4b5563;">string</div><div style="position:absolute;left:1625px;top:883px;width:105px;height:53px;background:#f3f4f6;border-radius:9px;"></div><div style="position:absolute;left:1628px;top:887px;width:55px;height:46px;background:#fff;border-radius:8px;box-shadow:0 1px 3px rgba(0,0,0,.18);"></div><div style="position:absolute;left:1641.00px;top:896.38px;font-family:'Liberation Sans', sans-serif;font-size:22px;line-height:22px;white-space:pre;font-weight:bold;color:#1f2937;">${}</div><div style="position:absolute;left:1699px;top:900px;width:19px;height:19px;border:1.8px solid #9ca3af;border-radius:3px;box-sizing:border-box;"></div><svg style="position:absolute;left:1699px;top:900px;" width="19" height="19" viewBox="0 0 19 19"><path d="M12.6 4.6c-.5-.4-1.2-.6-1.9-.5-1.1.2-1.8 1-2.1 2.2L6.6 14.2c-.3 1.1-1 1.8-2 1.9-.6.1-1.1-.1-1.5-.4M6.2 8.6h5.4" fill="none" stroke="#8b919b" stroke-width="1.3" stroke-linecap="round"/></svg><div style="position:absolute;left:1771px;top:888px;width:76px;height:43px;background:#fff;border:1px solid #e5e7eb;border-radius:9px;box-sizing:border-box;"></div><svg style="position:absolute;left:1786.5px;top:897.0px;" width="25" height="25" viewBox="0 0 24 24"><g fill="none" stroke="currentColor" stroke-width="2" stroke-linecap="round" stroke-linejoin="round" stroke-width="2" style="color:#1f2937"><path d="M12 22v-5"/><path d="M9 8V2"/><path d="M15 8V2"/><path d="M18 8v5a4 4 0 0 1-4 4h-4a4 4 0 0 1-4-4V8Z"/></g></svg><svg style="position:absolute;left:1812.5px;top:899.5px;" width="20" height="20" viewBox="0 0 24 24"><g fill="none" stroke="currentColor" stroke-width="2" stroke-linecap="round" stroke-linejoin="round" stroke-width="2.8" style="color:#1f2937"><path d="M5 12h14"/><path d="m12 5 7 7-7 7"/></g></svg><div style="position:absolute;left:1036px;top:957px;width:808px;height:35px;background:#fff;border:1px solid #e5e7eb;border-radius:6px;box-sizing:border-box;box-shadow:inset 0 2px 3px rgba(0,0,0,.06);"></div><div style="position:absolute;left:1037px;top:958px;width:26px;height:33px;background:#f9fafb;border-right:1px solid #eceef1;border-radius:5px 0 0 5px;"></div><div style="position:absolute;left:1819px;top:958px;width:1px;height:33px;background:#eceef1;"></div><div style="position:absolute;left:1876px;top:856px;width:330px;height:40px;background:#dbe7fb;border-radius:8px;"></div><svg style="position:absolute;left:1893.2px;top:865.5px;" width="21" height="21" viewBox="0 0 24 24"><g fill="none" stroke="currentColor" stroke-width="2" stroke-linecap="round" stroke-linejoin="round" stroke-width="3" style="color:#1e3a9f"><path d="m12 19-7-7 7-7"/><path d="M19 12H5"/></g></svg><div style="position:absolute;left:1921.90px;top:863.98px;font-family:'Liberation Sans', sans-serif;font-size:24px;line-height:24px;white-space:pre;color:#1e3a9f;letter-spacing:0.6px;-webkit-text-stroke:0.5px #1e3a9f;">Edit or connect an input</div><div style="position:absolute;left:1876px;top:910px;width:534px;height:50px;background:#fff;border:1.5px solid #d1d5db;border-radius:9px;box-sizing:border-box;"></div><div style="position:absolute;left:1892.00px;top:922.43px;font-family:'Liberation Sans', sans-serif;font-size:24.3px;line-height:24.3px;white-space:pre;color:#6b7280;">Search prop...</div><div style="position:absolute;left:1876.80px;top:992.34px;font-family:'Liberation Sans', sans-serif;font-size:23.7px;line-height:23.7px;white-space:pre;font-weight:bold;color:#1f2937;">Flow Input</div><div style="position:absolute;left:1890.50px;top:1033.37px;font-family:'Liberation Sans', sans-serif;font-size:20px;line-height:20px;white-space:pre;color:#4b5563;">No items ([])</div><div style="position:absolute;left:1876.90px;top:1083.01px;font-family:'Liberation Sans', sans-serif;font-size:24.2px;line-height:24.2px;white-space:pre;font-weight:bold;color:#1f2937;">Variables</div><div style="position:absolute;left:1877.00px;top:1181.91px;font-family:'Liberation Sans', sans-serif;font-size:23.5px;line-height:23.5px;white-space:pre;font-weight:bold;color:#1f2937;">Resources</div><div style="position:absolute;left:1876px;top:1115px;width:59px;height:43px;border:1.8px solid #2f6fe4;border-radius:8px;box-sizing:border-box;"></div><div style="position:absolute;left:1884.00px;top:1127.87px;font-family:'Liberation Mono', monospace;font-size:23px;line-height:23px;white-space:pre;color:#1f2937;letter-spacing:-5.6px;">{...}</div><div style="position:absolute;left:1876px;top:1213px;width:59px;height:43px;border:1.8px solid #2f6fe4;border-radius:8px;box-sizing:border-box;"></div><div style="position:absolute;left:1884.00px;top:1225.87px;font-family:'Liberation Mono', monospace;font-size:23px;line-height:23px;white-space:pre;color:#1f2937;letter-spacing:-5.6px;">{...}</div>
</body></html>
